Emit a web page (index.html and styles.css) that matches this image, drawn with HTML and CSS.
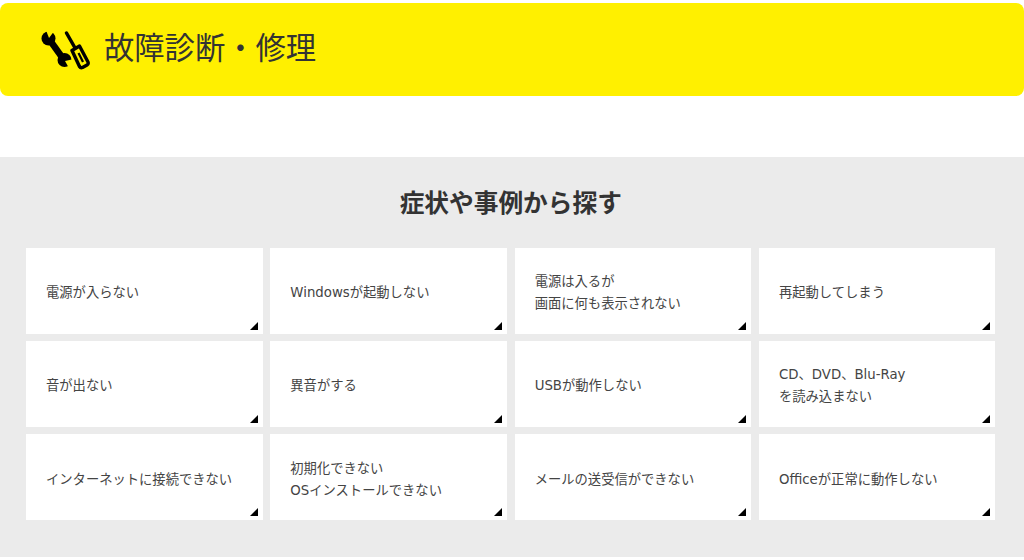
FILE: index.html
```html
<!DOCTYPE html>
<html lang="ja">
<head>
<meta charset="utf-8">
<title>故障診断・修理</title>
<link rel="stylesheet" href="styles.css">
</head>
<body>
<header class="banner">
  <svg class="banner-icon" viewBox="0 0 52 40" width="52" height="40" aria-hidden="true">
    <path class="wrench-bar" d="M9 9 L24 30"/>
    <circle class="wrench-head" cx="8.5" cy="8.5" r="7"/>
    <circle class="wrench-head" cx="24.5" cy="30" r="7"/>
    <path class="notch" d="M9 8 L5.5 -1 L15 0 Z"/>
    <path class="notch" d="M25 31 L34 29 L30 40 Z"/>
    <path class="driver-shaft" d="M26.5 3 L34.5 17"/>
    <path class="driver-handle" d="M32 20.5 L39.5 16 L48 32 A2.5 2.5 0 0 1 47 35 L42.5 37.5 A2.5 2.5 0 0 1 39.5 36.5 Z"/>
    <path class="driver-slot" d="M38.5 23 L43 32"/>
  </svg>
  <h1 class="banner-title">故障診断・修理</h1>
</header>
<section class="symptoms">
  <h2 class="symptoms-title">症状や事例から探す</h2>
  <ul class="grid">
    <li class="card"><span>電源が入らない</span></li>
    <li class="card"><span>Windowsが起動しない</span></li>
    <li class="card"><span>電源は入るが<br>画面に何も表示されない</span></li>
    <li class="card"><span>再起動してしまう</span></li>
    <li class="card"><span>音が出ない</span></li>
    <li class="card"><span>異音がする</span></li>
    <li class="card"><span>USBが動作しない</span></li>
    <li class="card"><span>CD、DVD、Blu-Ray<br>を読み込まない</span></li>
    <li class="card"><span>インターネットに接続できない</span></li>
    <li class="card"><span>初期化できない<br>OSインストールできない</span></li>
    <li class="card"><span>メールの送受信ができない</span></li>
    <li class="card"><span>Officeが正常に動作しない</span></li>
  </ul>
</section>
</body>
</html>
```
FILE: styles.css
```css
* { box-sizing: border-box; }
html, body { margin: 0; padding: 0; background: #fff; }
body {
  font-family: "Noto Sans CJK JP", "Noto Sans", sans-serif;
  color: #333;
  padding-top: 3px;
  overflow: hidden;
}
.banner {
  height: 93px;
  background: #fff000;
  border-radius: 8px;
  display: flex;
  align-items: center;
  gap: 12px;
  padding: 0 0 7px 40px;
}
.banner-icon { flex: none; width: 52px; height: 40px; margin-top: 7px; }
.wrench-bar { stroke: #000; stroke-width: 6.5; fill: none; }
.wrench-head { fill: #000; }
.notch { fill: #fff000; }
.driver-shaft { stroke: #000; stroke-width: 3.5; stroke-linecap: round; fill: none; }
.driver-handle { fill: #fff000; stroke: #000; stroke-width: 3.4; stroke-linejoin: round; }
.driver-slot { stroke: #000; stroke-width: 2.2; fill: none; }
.banner-title {
  margin: 0;
  font-size: 30.3px;
  font-weight: 400;
  line-height: 1.2;
}
.symptoms {
  margin-top: 61px;
  height: 400px;
  background: #ebebeb;
  padding: 27px 28.5px 0 26px;
}
.symptoms-title {
  margin: 0 0 30px;
  text-align: center;
  font-size: 24.7px;
  font-weight: 700;
  line-height: 34px;
}
.grid {
  list-style: none;
  margin: 0;
  padding: 0;
  display: grid;
  grid-template-columns: repeat(4, 236.5px);
  grid-auto-rows: 85.7px;
  column-gap: 7.83px;
  row-gap: 7.45px;
}
.card {
  position: relative;
  background: #fff;
  padding: 5px 10px 0 20px;
  display: flex;
  align-items: center;
  font-family: "DejaVu Sans", "Noto Sans CJK JP", sans-serif;
  font-size: 13.3px;
  font-weight: 400;
  line-height: 22px;
  color: #444;
}
.card::after {
  content: "";
  position: absolute;
  right: 5px;
  bottom: 4px;
  border-style: solid;
  border-width: 0 0 8px 8px;
  border-color: transparent transparent #000 transparent;
}
```
